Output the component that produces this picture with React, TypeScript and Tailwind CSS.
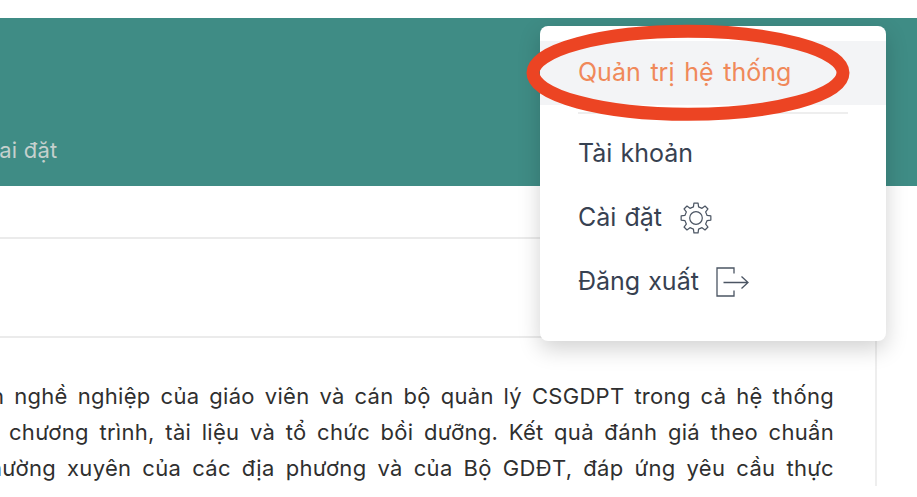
import React from "react";

const font = "font-['Inter','Noto_Sans',sans-serif]";

function Gear() {
  const pts: string[] = [];
  for (let k = 0; k < 8; k++) {
    const a = (k * 45 * Math.PI) / 180;
    const offs: [number, number][] = [
      [11.4, -13],
      [15, -8],
      [15, 8],
      [11.4, 13],
    ];
    for (const [r, d] of offs) {
      const t = a + (d * Math.PI) / 180;
      pts.push(`${(16 + r * Math.cos(t)).toFixed(2)},${(16 + r * Math.sin(t)).toFixed(2)}`);
    }
  }
  return (
    <svg width="32" height="32" viewBox="0 0 32 32" fill="none" stroke="#4b5563" strokeWidth="1.2" strokeLinejoin="round">
      <polygon points={pts.join(" ")} />
      <circle cx="16" cy="16" r="6.300" />
    </svg>
  );
}

function Logout() {
  return (
    <svg width="33" height="30" viewBox="0 0 33 30" fill="none" stroke="#4b5563" strokeWidth="1.3">
      <path d="M18 6.500V1H1v28h17v-5.500" />
      <path d="M7.500 15.500h24M25.500 9.500l6.500 6-6.500 6" />
    </svg>
  );
}

function Line({ text, left }: { text: string; left: string }) {
  return <div className={`${left} whitespace-nowrap [text-align:justify] [text-align-last:justify]`}>{text}</div>;
}

export default function App() {
  return (
    <div className={`relative h-[497px] w-[917px] overflow-hidden bg-white ${font}`}>
      <header className="mt-[18px] flex h-[168px] items-end bg-[#3f8c85] pb-[21px]">
        <span className="-ml-[17px] text-[22px] leading-[30px] tracking-[0.2px] text-[#c5d0cd]">Cai đặt</span>
      </header>
      <main className="-ml-[20px] w-[897px] border-r-2 border-[#eeeeee]">
        <div className="h-[53px] border-b-2 border-[#ebebeb]" />
        <div className="h-[99px] border-b-2 border-[#ebebeb]" />
        <div className="w-[854px] pt-[40px] text-[22px] leading-[36px] tracking-[0.3px] text-[#2f2f2f]">
          <Line left="pl-[11px]" text="n nghề nghiệp của giáo viên và cán bộ quản lý CSGDPT trong cả hệ thống" />
          <Line left="pl-[29px]" text="chương trình, tài liệu và tổ chức bồi dưỡng. Kết quả đánh giá theo chuẩn" />
          <Line left="pl-[9px]" text="hường xuyên của các địa phương và của Bộ GDĐT, đáp ứng yêu cầu thực" />
        </div>
      </main>

      <div className="absolute left-[540px] top-[26px] h-[315px] w-[346px] rounded-lg bg-white pt-[15px] text-[25px] text-[#374151] [word-spacing:1px] shadow-[0_8px_22px_rgba(0,0,0,0.18)]">
        <div className="flex h-[64px] items-center bg-[#f3f4f6] pl-[38px] text-[#f0895a] [word-spacing:2.7px]">Quản trị hệ thống</div>
        <div className="ml-[38px] mr-[38px] mt-[7px] h-[2px] bg-[#eeeeee]" />
        <div className="flex h-[64px] items-center pl-[38px] pt-[15px]">Tài khoản</div>
        <div className="flex h-[64px] items-center gap-[18px] pl-[38px] pt-[15px]">
          Cài đặt <Gear />
        </div>
        <div className="flex h-[64px] items-center gap-[17px] pl-[38px] pt-[15px]">
          Đăng xuất <Logout />
        </div>
      </div>

      <svg className="absolute left-[520px] top-[18px]" width="340" height="110" viewBox="0 0 340 110" fill="none">
        <ellipse cx="168" cy="54.800" rx="155" ry="41.500" stroke="#ec4423" strokeWidth="13" />
      </svg>
    </div>
  );
}
